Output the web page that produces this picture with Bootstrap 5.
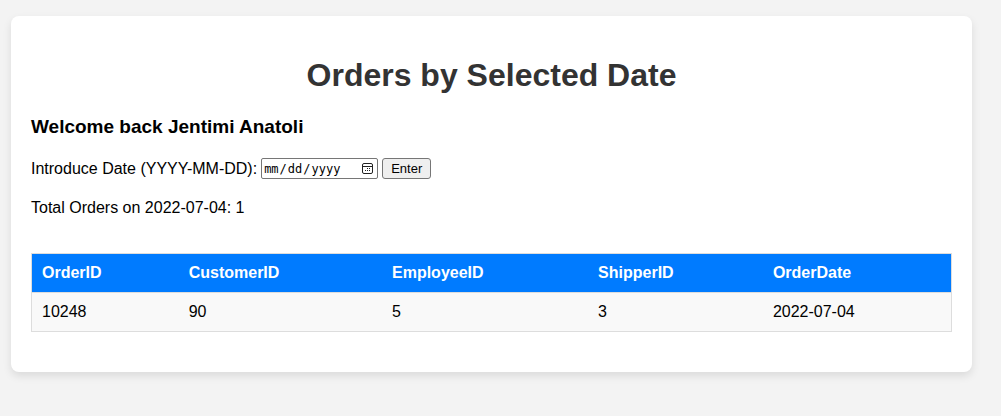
<!DOCTYPE html>
<html lang="en">
<head>
<meta charset="utf-8">
<meta name="viewport" content="width=device-width, initial-scale=1">
<title>Orders by Selected Date</title>
<link href="https://cdn.jsdelivr.net/npm/bootstrap@5.3.0/dist/css/bootstrap.min.css" rel="stylesheet">
<style>
  body {
    background: #f3f3f3;
    color: #000;
    font-family: "Liberation Sans", Arial, sans-serif;
    font-size: 16px;
    line-height: 18px;
  }
  .page-shell { padding: 16px 29px 16px 11px; }
  .orders-panel {
    background: #fff;
    border-radius: 8px;
    box-shadow: 0 4px 8px rgba(0, 0, 0, .1);
    padding: 40px 20px;
  }
  .panel-title { color: #333; font-size: 32px; line-height: 38px; margin-bottom: 21px; }
  .welcome { font-size: 19px; line-height: 24px; margin-bottom: 19px; }
  .date-form { gap: 4px; margin-bottom: 20px; }
  .date-field {
    width: 117px;
    height: 21px;
    padding: 1px 2px;
    border: 1px solid #767676;
    border-radius: 2px;
    background: #fff;
    color: #000;
    font-family: "DejaVu Sans Mono", monospace;
    font-size: 12px;
  }
  .date-field::-webkit-datetime-edit-text { padding: 0 1px; }
  .date-field::-webkit-calendar-picker-indicator {
    width: 13px;
    height: 13px;
    padding: 0;
    margin-right: 1px;
    background: url("data:image/svg+xml,%3Csvg xmlns='http://www.w3.org/2000/svg' viewBox='0 0 13 13'%3E%3Crect x='1.5' y='1.5' width='10' height='10' rx='1.5' fill='none' stroke='%23222'/%3E%3Cpath d='M2 4.5h9' stroke='%23222'/%3E%3Cpath d='M6 6h1v1H6zM8 6h1v1H8zM4 8h1v1H4zM6 8h1v1H6zM8 8h1v1H8z' fill='%23222'/%3E%3C/svg%3E") center / 13px 13px no-repeat;
  }
  .enter-button {
    height: 21px;
    padding: 0 8px;
    border: 1px solid #767676;
    border-radius: 3px;
    background: #efefef;
    color: #000;
    font-size: 13px;
    line-height: 19px;
  }
  .orders-table { border: 1px solid #ddd; margin: 36px 0 0; }
  .orders-table th, .orders-table td { padding: 10px; border-color: #ddd; }
  .orders-table thead th { background: #007bff; color: #fff; }
  .orders-table tbody td { background: #f9f9f9; color: #000; }
</style>
</head>
<body>
<div class="page-shell">
  <main class="orders-panel">
    <h1 class="panel-title text-center fw-bold">Orders by Selected Date</h1>
    <h3 class="welcome fw-bold">Welcome back Jentimi Anatoli</h3>
    <form class="date-form d-flex flex-wrap align-items-center">
      <label for="order-date">Introduce Date (YYYY-MM-DD):</label>
      <input class="date-field" type="date" id="order-date" name="date">
      <button class="enter-button" type="submit">Enter</button>
    </form>
    <p class="total-orders">Total Orders on 2022-07-04: 1</p>
    <table class="orders-table table">
      <colgroup>
        <col style="width:16%"><col style="width:22.1%"><col style="width:22.4%"><col style="width:19%"><col>
      </colgroup>
      <thead>
        <tr><th scope="col">OrderID</th><th scope="col">CustomerID</th><th scope="col">EmployeeID</th><th scope="col">ShipperID</th><th scope="col">OrderDate</th></tr>
      </thead>
      <tbody>
        <tr><td>10248</td><td>90</td><td>5</td><td>3</td><td>2022-07-04</td></tr>
      </tbody>
    </table>
  </main>
</div>
<script src="https://cdn.jsdelivr.net/npm/bootstrap@5.3.0/dist/js/bootstrap.bundle.min.js"></script>
</body>
</html>
